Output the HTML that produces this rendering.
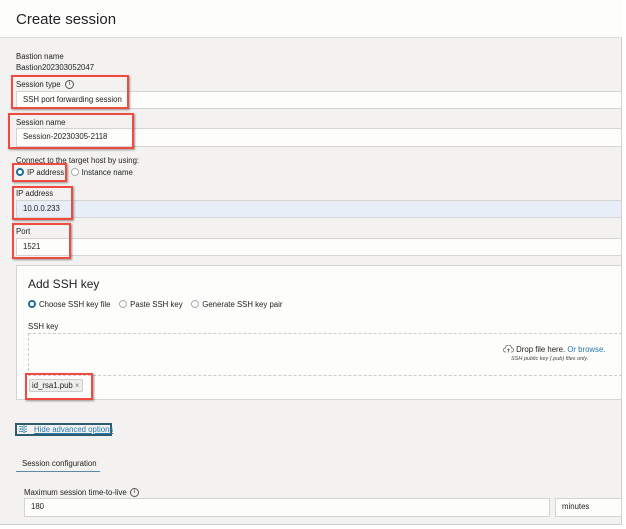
<!DOCTYPE html>
<html><head><meta charset="utf-8"><style>
*{box-sizing:border-box;margin:0;padding:0}
body{width:626px;height:529px;background:#fff;font-family:"Liberation Sans",sans-serif;color:#222;position:relative;overflow:hidden;font-size:7.8px}
.a{position:absolute;white-space:nowrap}
.pg{left:0;top:0;width:622px;height:525px;background:#f3f2f1;border-right:1px solid #ccc;border-bottom:1px solid #ccc}
.hd{left:0;top:0;width:622px;height:38px;background:#fdfdfc;border-bottom:1px solid #ddd}
.inp{background:#fdfdfc;border:1px solid #d6d4d2;height:18px;padding-left:6px;line-height:16px}
.red{border:2.5px solid #ef4b3f;box-shadow:1px 1px 2px rgba(0,0,0,.4)}
.rad{display:inline-block;width:8px;height:8px;border-radius:50%;border:1px solid #aaa;background:#fff;vertical-align:-1px;margin-right:3px}
.rad.on{border:2.5px solid #1f6f94;background:#fff}
.i{position:absolute;width:9px;height:9px;border-radius:50%;border:1px solid #555;font-size:6px;line-height:7px;text-align:center}
</style></head><body>
<div class="a pg"></div>
<div class="a hd"></div>
<div class="a" style="left:16px;top:11px;font-size:15px;color:#222">Create session</div>
<div class="a" style="left:16px;top:52px">Bastion name</div>
<div class="a" style="left:16px;top:63px">Bastion202303052047</div>

<div class="a" style="left:16px;top:80px">Session type</div><div class="i" style="left:65px;top:80px">i</div>
<div class="a inp" style="left:16px;top:91px;width:606px">SSH port forwarding session</div>
<div class="a red" style="left:11px;top:75px;width:118px;height:34px"></div>

<div class="a" style="left:16px;top:118px">Session name</div>
<div class="a inp" style="left:16px;top:128px;width:606px;height:19px">Session-20230305-2118</div>
<div class="a red" style="left:8px;top:113px;width:126px;height:36px"></div>

<div class="a" style="left:16px;top:156px">Connect to the target host by using:</div>
<div class="a" style="left:16px;top:168px"><span class="rad on"></span>IP address &nbsp;&nbsp;<span class="rad"></span>Instance name</div>
<div class="a red" style="left:12px;top:163px;width:55px;height:19px"></div>

<div class="a" style="left:16px;top:189px">IP address</div>
<div class="a inp" style="left:16px;top:200px;width:606px;background:#e8eef8;height:18px">10.0.0.233</div>
<div class="a red" style="left:12px;top:186px;width:61px;height:34px"></div>

<div class="a" style="left:16px;top:227px">Port</div>
<div class="a inp" style="left:16px;top:238px;width:606px">1521</div>
<div class="a red" style="left:12px;top:223px;width:59px;height:36px"></div>

<div class="a" style="left:16px;top:265px;width:606px;height:135px;background:#fdfdfc;border:1px solid #d6d4d2"></div>
<div class="a" style="left:28px;top:277px;font-size:12px">Add SSH key</div>
<div class="a" style="left:28px;top:300px"><span class="rad on"></span>Choose SSH key file &nbsp;&nbsp;&nbsp;<span class="rad"></span>Paste SSH key &nbsp;&nbsp;&nbsp;<span class="rad"></span>Generate SSH key pair</div>
<div class="a" style="left:28px;top:322px">SSH key</div>
<div class="a" style="left:28px;top:333px;width:594px;height:43px;border-top:1px dashed #ccc;border-bottom:1px dashed #ccc;border-left:1px dashed #ccc"></div>
<div class="a" style="left:503px;top:345px"><svg width="11" height="8" viewBox="0 0 11 8" style="vertical-align:-1px"><path d="M3 7H2.5A2 2 0 0 1 2.5 3 3 3 0 0 1 8.5 3 2 2 0 0 1 8.5 7H8M5.5 7.5V4M4.3 5.2 5.5 4 6.7 5.2" fill="none" stroke="#666" stroke-width=".8"/></svg> Drop file here. <span style="color:#2a7ab0">Or browse.</span></div>
<div class="a" style="left:511px;top:356px;font-size:5.5px;font-style:italic;color:#444">SSH public key (.pub) files only.</div>
<div class="a" style="left:29px;top:379px;width:54px;height:13px;background:#eeeeec;border:1px solid #ccc;border-radius:2px;padding-left:2px;line-height:11px">id_rsa1.pub <span style="color:#777">×</span></div>
<div class="a red" style="left:25px;top:373px;width:68px;height:27px"></div>

<div class="a" style="left:15px;top:423px;width:97px;height:13px;border:2px solid #2e5b6e;line-height:9px;padding-left:2px"><svg width="8" height="8" viewBox="0 0 8 8" style="vertical-align:-1px"><path d="M0 1.5H8M0 4H8M0 6.5H8" stroke="#2a7ab0" stroke-width=".7"/><circle cx="5" cy="1.5" r="1" fill="#fff" stroke="#2a7ab0" stroke-width=".6"/><circle cx="2.5" cy="4" r="1" fill="#fff" stroke="#2a7ab0" stroke-width=".6"/><circle cx="5" cy="6.5" r="1" fill="#fff" stroke="#2a7ab0" stroke-width=".6"/></svg><span style="color:#2a7ab0;text-decoration:underline;margin-left:7px">Hide advanced options</span></div>

<div class="a" style="left:16px;top:459px;width:84px;height:13px;border-bottom:1.5px solid #5a8ca8;padding-left:6px">Session configuration</div>

<div class="a" style="left:24px;top:488px">Maximum session time-to-live</div><div class="i" style="left:130px;top:488px">i</div>
<div class="a inp" style="left:24px;top:498px;width:526px;height:19px">180</div>
<div class="a inp" style="left:555px;top:498px;width:67px;height:19px">minutes</div>
</body></html>
